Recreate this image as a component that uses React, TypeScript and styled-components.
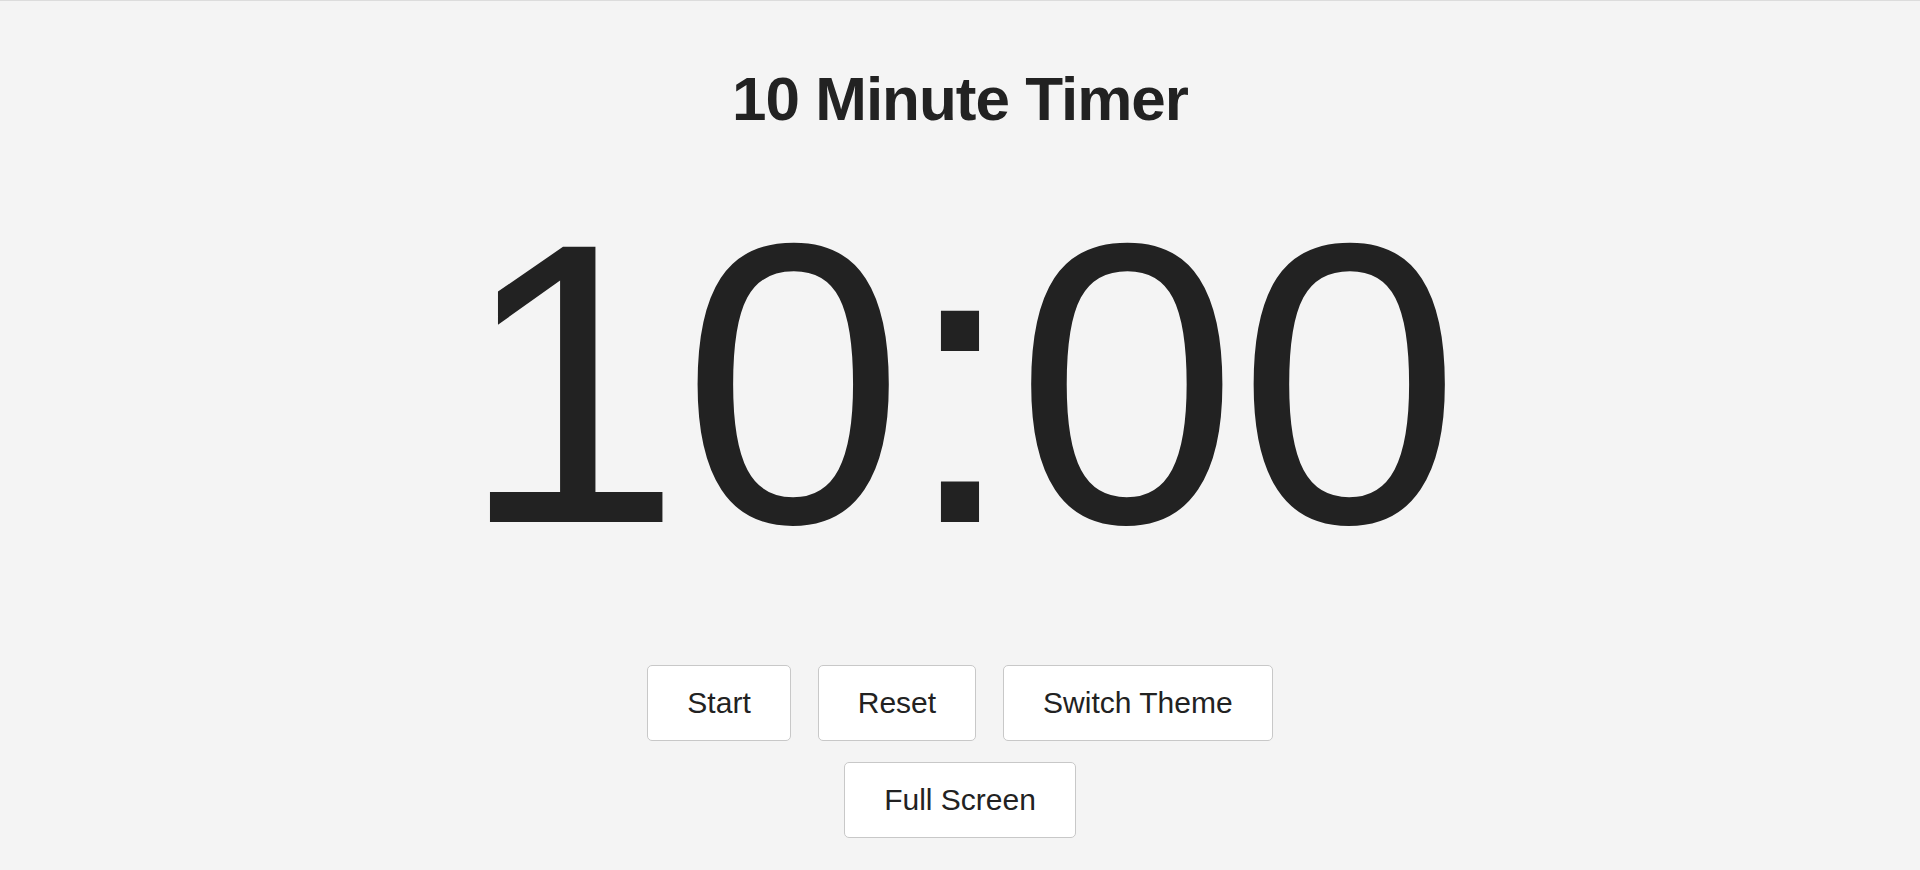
import React, { useEffect, useState } from 'react';
import styled, { createGlobalStyle } from 'styled-components';

const GlobalStyle = createGlobalStyle`
  html, body {
    margin: 0;
    padding: 0;
    background: #f4f4f4;
  }
  body {
    font-family: "Liberation Sans", Arial, sans-serif;
    color: #222;
  }
`;

const Page = styled.div`
  min-height: 869px;
  border-top: 1px solid #dcdcdc;
  display: flex;
  flex-direction: column;
  align-items: center;
  padding-top: 62px;
  box-sizing: border-box;
`;

const Title = styled.h1`
  margin: 0;
  font-size: 62px;
  letter-spacing: -1px;
  font-weight: 700;
  line-height: normal;
  color: #222;
`;

const Clock = styled.div`
  margin-top: 20px;
  font-size: 400px;
  line-height: 460px;
  color: #222;
`;

const Controls = styled.div`
  margin-top: 51px;
  max-width: 700px;
  display: flex;
  flex-wrap: wrap;
  justify-content: center;
  gap: 21px 27px;
`;

const Button = styled.button`
  font-family: "Liberation Sans", Arial, sans-serif;
  font-size: 30px;
  line-height: normal;
  color: #222;
  background: #fff;
  border: 1px solid #c8c8c8;
  border-radius: 5px;
  padding: 20px 39px;
  cursor: pointer;
`;

const TOTAL = 600;

const format = (s: number) => {
  const m = Math.floor(s / 60);
  const sec = s % 60;
  return `${m}:${sec < 10 ? '0' : ''}${sec}`;
};

const App: React.FC = () => {
  const [left, setLeft] = useState(TOTAL);
  const [running, setRunning] = useState(false);

  useEffect(() => {
    if (!running) return;
    const id = setInterval(() => {
      setLeft((prev) => (prev > 0 ? prev - 1 : 0));
    }, 1000);
    return () => clearInterval(id);
  }, [running]);

  return (
    <>
      <GlobalStyle />
      <Page>
        <Title>10 Minute Timer</Title>
        <Clock>{format(left)}</Clock>
        <Controls>
          <Button onClick={() => setRunning(!running)}>{running ? 'Pause' : 'Start'}</Button>
          <Button
            onClick={() => {
              setRunning(false);
              setLeft(TOTAL);
            }}
          >
            Reset
          </Button>
          <Button>Switch Theme</Button>
          <Button>Full Screen</Button>
        </Controls>
      </Page>
    </>
  );
};

export default App;
